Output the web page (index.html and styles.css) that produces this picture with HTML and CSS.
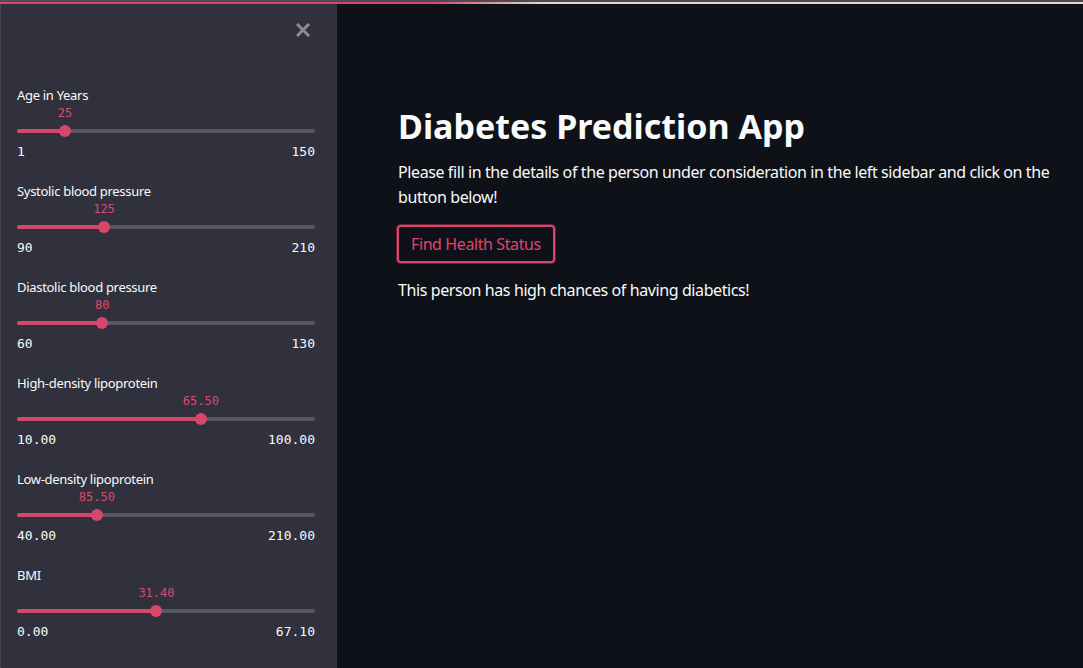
FILE: index.html
```html
<!DOCTYPE html>
<html>
<head>
<meta charset="utf-8">
<link rel="stylesheet" href="styles.css">
</head>
<body>
<div class="decoration"></div>
<div class="app">
  <aside class="sidebar">
    <div class="close-row">
      <svg class="close" width="14" height="14" viewBox="0 0 14 14"><path d="M2 2 L12 12 M12 2 L2 12" stroke="#8b8c95" stroke-width="3" stroke-linecap="square"/></svg>
    </div>
    <div class="field">
      <div class="label">Age in Years</div>
      <div class="value-row"><span class="value" style="left:16.1%">25</span></div>
      <div class="track"><div class="fill" style="width:16.1%"></div><div class="thumb" style="left:16.1%"></div></div>
      <div class="minmax"><span>1</span><span>150</span></div>
    </div>
    <div class="field">
      <div class="label">Systolic blood pressure</div>
      <div class="value-row"><span class="value" style="left:29.2%">125</span></div>
      <div class="track"><div class="fill" style="width:29.2%"></div><div class="thumb" style="left:29.2%"></div></div>
      <div class="minmax"><span>90</span><span>210</span></div>
    </div>
    <div class="field">
      <div class="label">Diastolic blood pressure</div>
      <div class="value-row"><span class="value" style="left:28.6%">80</span></div>
      <div class="track"><div class="fill" style="width:28.6%"></div><div class="thumb" style="left:28.6%"></div></div>
      <div class="minmax"><span>60</span><span>130</span></div>
    </div>
    <div class="field">
      <div class="label">High-density lipoprotein</div>
      <div class="value-row"><span class="value" style="left:61.7%">65.50</span></div>
      <div class="track"><div class="fill" style="width:61.7%"></div><div class="thumb" style="left:61.7%"></div></div>
      <div class="minmax"><span>10.00</span><span>100.00</span></div>
    </div>
    <div class="field">
      <div class="label">Low-density lipoprotein</div>
      <div class="value-row"><span class="value" style="left:26.8%">85.50</span></div>
      <div class="track"><div class="fill" style="width:26.8%"></div><div class="thumb" style="left:26.8%"></div></div>
      <div class="minmax"><span>40.00</span><span>210.00</span></div>
    </div>
    <div class="field">
      <div class="label">BMI</div>
      <div class="value-row"><span class="value" style="left:46.8%">31.40</span></div>
      <div class="track"><div class="fill" style="width:46.8%"></div><div class="thumb" style="left:46.8%"></div></div>
      <div class="minmax"><span>0.00</span><span>67.10</span></div>
    </div>
  </aside>
  <main class="main">
    <div class="content">
      <h1 class="title">Diabetes Prediction App</h1>
      <p class="text">Please fill in the details of the person under consideration in the left sidebar and click on the button below!</p>
      <button class="btn">Find Health Status</button>
      <p class="text result">This person has high chances of having diabetics!</p>
    </div>
  </main>
</div>
</body>
</html>
```

FILE: styles.css
```css
html, body {
  margin: 0;
  padding: 0;
  height: 100%;
  overflow: hidden;
}
body {
  background: #0e1117;
  color: #fafafa;
  font-family: "Noto Sans", "Open Sans", sans-serif;
}
.decoration {
  position: fixed;
  top: 0;
  left: 0;
  right: 0;
  height: 4px;
  border-top: 2px solid #4b4c57;
  box-sizing: border-box;
  background: linear-gradient(90deg, #d8476b 0%, #d8476b 40%, #e3d9c6 50%, #e3d9c6 100%);
  z-index: 10;
}
.app {
  display: flex;
  height: 100%;
}
.sidebar {
  width: 337px;
  flex: none;
  background: #30313d;
  box-sizing: border-box;
  padding: 22px 22px 0 16px;
  border-left: 1px dotted #55566a;
}
.close-row {
  display: flex;
  justify-content: flex-end;
  height: 16px;
  align-items: center;
  padding-right: 5px;
  margin-bottom: 48px;
}
.close {
  display: block;
}
.field {
  margin-bottom: 21px;
  width: 298px;
}
.label {
  font-size: 13px;
  line-height: 18px;
  letter-spacing: -0.3px;
  color: #fafafa;
}
.value-row {
  position: relative;
  height: 19px;
}
.value {
  position: absolute;
  top: 0;
  transform: translateX(-50%);
  font-family: "DejaVu Sans Mono", "Liberation Mono", monospace;
  font-size: 12px;
  line-height: 18px;
  color: #dc4a6e;
}
.track {
  position: relative;
  height: 16px;
  display: flex;
  align-items: center;
}
.track::before {
  content: "";
  position: absolute;
  left: 0;
  right: 0;
  top: 6px;
  height: 4px;
  border-radius: 2px;
  background: #565763;
}
.fill {
  position: relative;
  height: 4px;
  border-radius: 2px;
  background: #d8476b;
}
.thumb {
  position: absolute;
  top: 2px;
  width: 12px;
  height: 12px;
  border-radius: 50%;
  background: #d8476b;
  transform: translateX(-50%);
}
.minmax {
  display: flex;
  justify-content: space-between;
  margin-top: 4px;
  font-family: "DejaVu Sans Mono", "Liberation Mono", monospace;
  font-size: 13px;
  line-height: 18px;
  color: #fafafa;
}
.main {
  flex: 1;
  box-sizing: border-box;
  padding: 104px 20px 0 61px;
}
.content {
  max-width: 665px;
}
.title {
  margin: 0 0 12px 0;
  font-size: 34px;
  line-height: 44px;
  font-weight: 700;
  color: #fafafa;
}
.text {
  margin: 0;
  font-size: 16px;
  line-height: 25px;
  letter-spacing: -0.4px;
  color: #fafafa;
}
.btn {
  display: block;
  margin: 15px 0 15px -1px;
  height: 38px;
  padding: 0 12px;
  background: #0e1117;
  border: 2px solid #d8476b;
  box-shadow: 0 0 0 1px #6b2237;
  border-radius: 4px;
  color: #e0436e;
  font-family: "Noto Sans", "Open Sans", sans-serif;
  font-size: 16px;
  letter-spacing: -0.4px;
}
```
